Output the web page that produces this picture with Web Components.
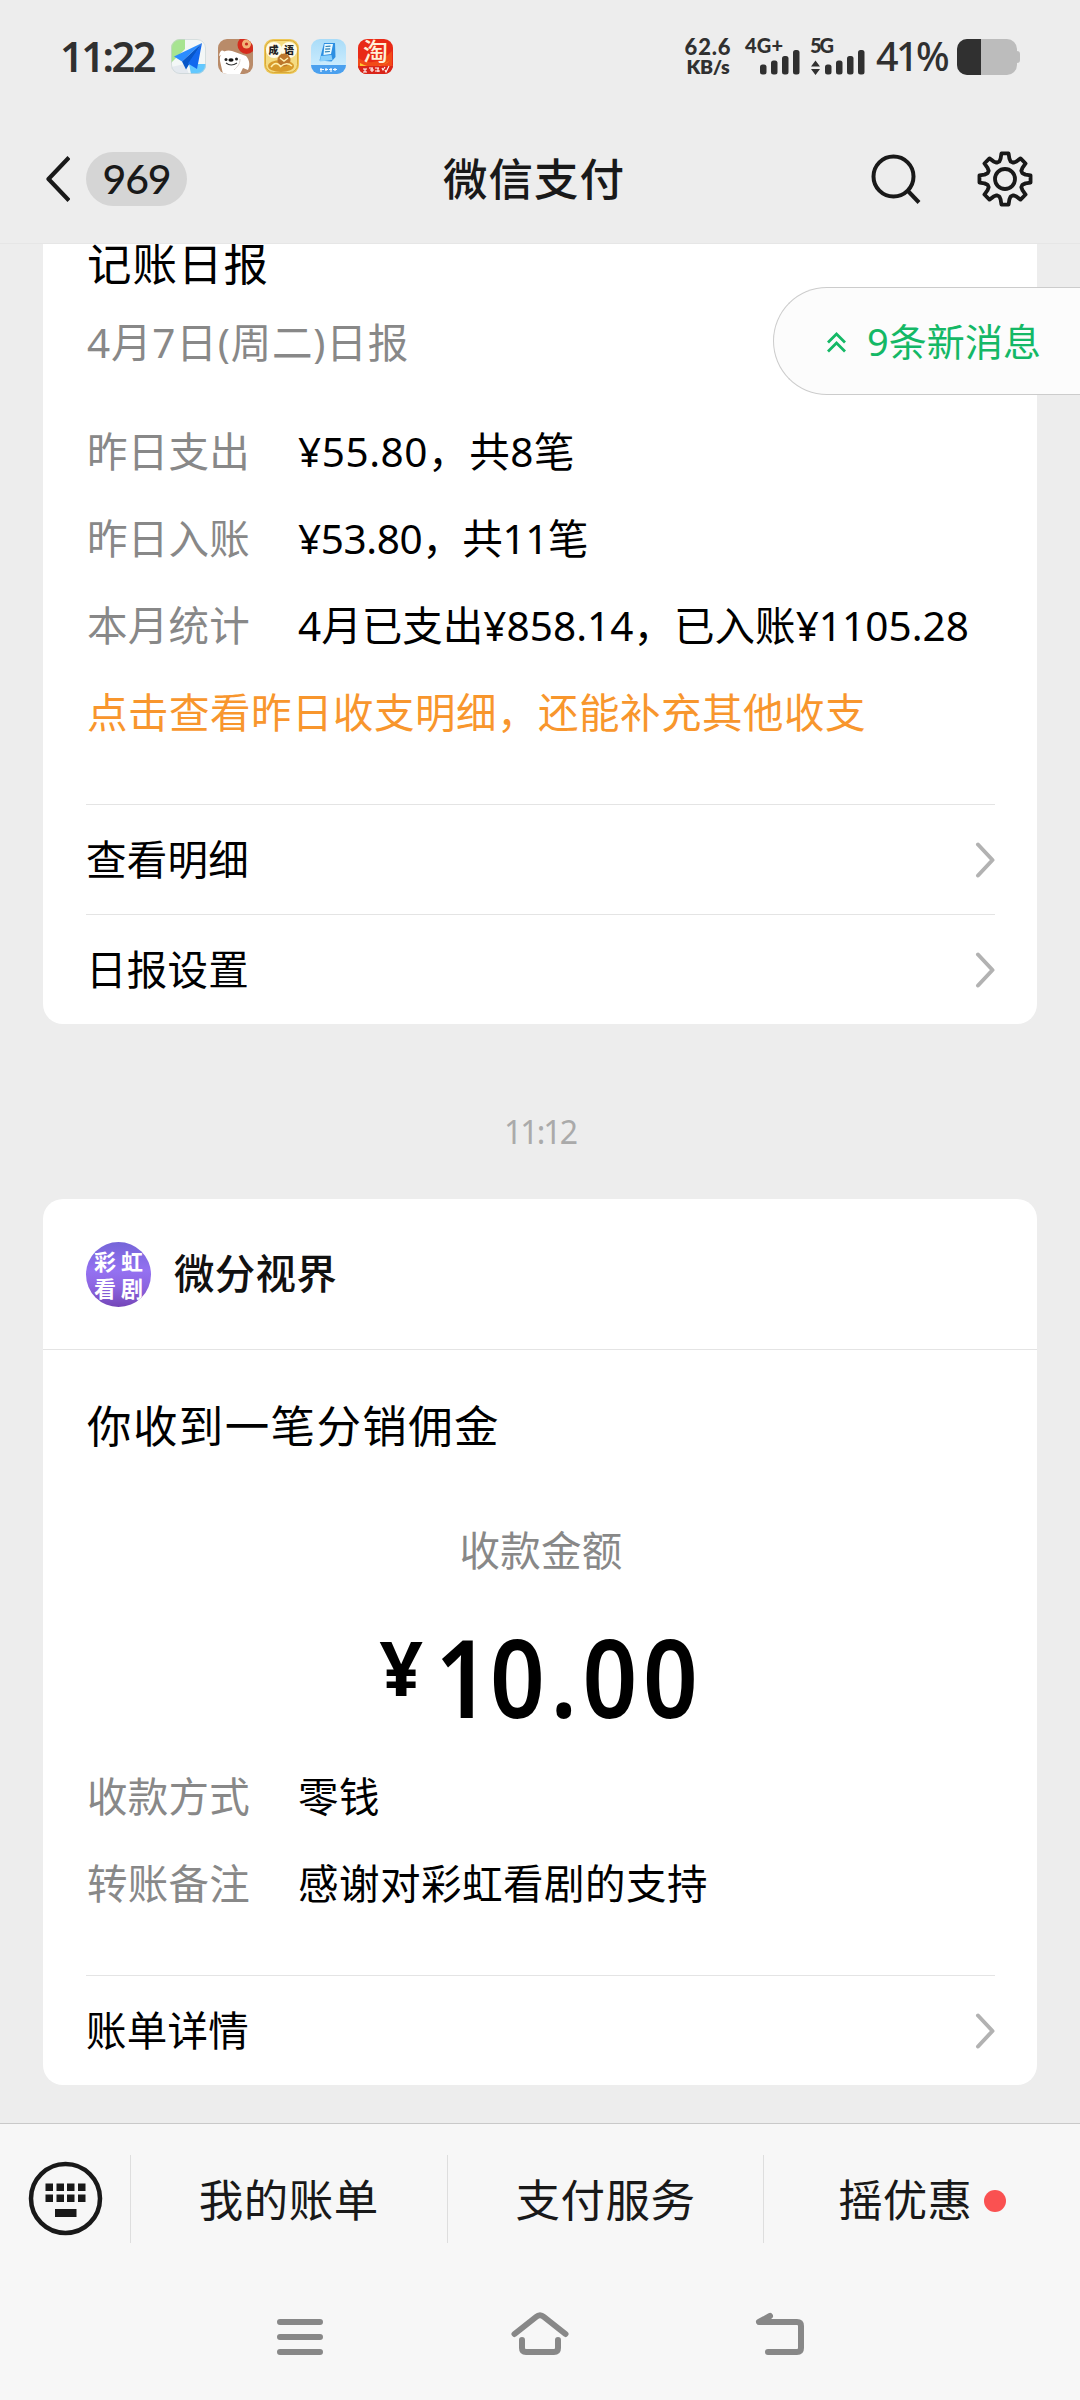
<!DOCTYPE html>
<html lang="zh-CN">
<head>
<meta charset="utf-8">
<title>微信支付</title>
<style>
html,body{margin:0;padding:0}
body{width:1080px;height:2400px;overflow:hidden;background:#ededed;color:#000;font-family:"Noto Sans","Noto Sans CJK SC",sans-serif;font-size:40.5px}
</style>
</head>
<body>
<pay-screen></pay-screen>
<script>
function define(name, html, setup) {
  const t = document.createElement('template');
  t.innerHTML = html;
  customElements.define(name, class extends HTMLElement {
    connectedCallback() {
      if (this.shadowRoot) return;
      this.attachShadow({ mode: 'open' }).appendChild(t.content.cloneNode(true));
      if (setup) setup(this, this.shadowRoot);
    }
  });
}

// Text whose tracking is adjusted so that its advance equals the "w" attribute.
// "sx" condenses the glyphs horizontally.
define('fit-text', `
<style>:host{display:block;white-space:nowrap;line-height:1.4;flex:none}span{display:inline-block;transform-origin:0 50%}</style>
<span><slot></slot></span>`, (el, root) => {
  const s = root.querySelector('span');
  const w = parseFloat(el.getAttribute('w'));
  const sx = parseFloat(el.getAttribute('sx')) || 1;
  const n = [...el.textContent].length;
  if (w && n) {
    const natural = s.getBoundingClientRect().width;
    s.style.letterSpacing = ((w / sx - natural) / n).toFixed(3) + 'px';
    el.style.width = w + 'px';
    if (sx !== 1) s.style.transform = 'scaleX(' + sx + ')';
  }
});

define('app-icons', `
<style>:host{display:flex;gap:11.7px;flex:none}svg{width:35px;height:35px;display:block;overflow:visible}text{font-family:"Noto Sans CJK SC",sans-serif}</style>
<svg viewBox="0 0 35 35"><defs><clipPath id="c"><rect width="35" height="35" rx="9"/></clipPath></defs><g clip-path="url(#c)"><rect width="35" height="35" fill="#f3f7f7"/><path d="M0 0h14v10L0 24z" fill="#a7e491"/><path d="M18 25h17v10H20z" fill="#62c8ff"/><path d="M0 28l14-3 4 10H0z" fill="#e4e9ef"/></g><path d="M31 4L3 17.500l8 5z" fill="#2b8dff"/><path d="M31 4L11 22.500l4 8 3-5z" fill="#0756c8"/><path d="M31 4L17 24.500l9 5.500z" fill="#1268ee"/><rect x=".5" y=".5" width="34" height="34" rx="8.500" fill="none" stroke="#c9d2d2" stroke-width=".7"/></svg>
<svg viewBox="0 0 35 35"><defs><clipPath id="c"><rect width="35" height="35" rx="9"/></clipPath></defs><g clip-path="url(#c)"><rect width="35" height="35" fill="#b98b69"/><circle cx="28.500" cy="6" r="9" fill="#d52c1d"/><circle cx="28.500" cy="5" r="4.500" fill="#f3b477"/><circle cx="28.500" cy="5" r="1.600" fill="#c92d20"/><path d="M2 22C1 14 7 10 14 12l14 5c4 5 4 9 2 14l-5-2-3 6H5z" fill="#fff"/><path d="M1 17c1-6 4-7 6-3z" fill="#fff"/><path d="M22 20c0 5-2 7-6 11" fill="none" stroke="#d8cfc8"/></g><circle cx="8" cy="20.500" r="1.500" fill="#222"/><circle cx="18.500" cy="20" r="1.500" fill="#222"/><ellipse cx="13" cy="21" rx="2.600" ry="1.800" fill="#111"/><path d="M8 24q5 4 11 0" fill="none" stroke="#333" stroke-width="1.100"/></svg>
<svg viewBox="0 0 35 35"><rect width="35" height="35" rx="9" fill="#edc858"/><rect x="1.500" y="1.500" width="32" height="32" rx="8" fill="#f4dc83" stroke="#d9a93a"/><circle cx="10" cy="11" r="8" fill="#fffbe9"/><circle cx="25" cy="11" r="8" fill="#fffbe9"/><text x="4.500" y="15" font-size="10" font-weight="900" fill="#222">成</text><text x="20" y="15" font-size="10" font-weight="900" fill="#222">语</text><ellipse cx="17" cy="27" rx="13" ry="6" fill="#d89b2c"/><circle cx="20" cy="21" r="6.500" fill="#bd772c"/><path d="M7 28q5-7 10 0m-1-9l4 3 4-3m-8 9q6-6 12-1" fill="none" stroke="#fff0ae" stroke-width="1.500"/></svg>
<svg viewBox="0 0 35 35"><defs><clipPath id="c"><rect width="35" height="35" rx="9"/></clipPath><linearGradient id="g" x2="0" y2="1"><stop stop-color="#a9dcf8"/><stop offset="1" stop-color="#d5f0ff"/></linearGradient></defs><g clip-path="url(#c)"><rect width="35" height="35" fill="url(#g)"/><path d="M0 26h35v9H0z" fill="#4ba0ee"/></g><path d="M13 4l11 0 .5 14-4 4.500-12-1z" fill="#2c8fe2"/><path d="M13.500 5l8.500 0-2 10-7.500 1z" fill="#e9faff"/><path d="M9.500 17l11-1 1 5-12.500 1.500z" fill="#8ad0fb"/><path d="M14.500 7.500l5-.4m-5.300 3l5-.3m-5.300 3l5-.3" stroke="#2c7fb4" stroke-width="1.200"/><path d="M9 30.500h4m1 0h3m1 0h3m1 0h4M10 29v4m5-4v3m5-3v4m4-4v3" stroke="#f5fbff" stroke-width="1.200"/></svg>
<svg viewBox="0 0 35 35"><rect width="35" height="35" rx="9" fill="#e92a17"/><path d="M0 19Q18 30 34 12v14a9 9 0 0 1-9 9H9a9 9 0 0 1-9-9z" fill="#f24a18"/><path d="M2 24q17 9 30-3-7 9-30 6z" fill="#ffc931"/><path d="M0 27h35c-1 5-4 8-9 8H9c-5 0-8-3-9-8z" fill="#d9251a"/><text x="5" y="21.500" font-size="25" font-weight="500" fill="#fff0d8">淘</text><path d="M5 30h4m-2 0v3m-2 0h4m2-4h4m-3 2h4m-2-2v4m3-4h4m-4 3h5m-2-3v4m4-4l1 2 2-3m0 3l1 2 3-6" fill="none" stroke="#fff" stroke-width="1.100"/></svg>`);

define('signal-bars', `
<style>:host{display:block;flex:none}svg{display:block;width:54px;height:37px;overflow:visible}text{font-family:Lato,sans-serif;font-weight:900;fill:#303030}</style>
<svg viewBox="0 0 54 37"><text x="-1" y="15" font-size="20"></text><g fill="#303030"><rect class="b" y="26.500" width="6.500" height="10" rx="2.500"/><rect class="b" y="22.500" width="6.500" height="14" rx="2.500"/><rect class="b" y="18" width="6.500" height="18.500" rx="2.500"/><rect class="b" y="12" width="6.500" height="24.500" rx="2.500"/><path class="arr" d="M0 28.500l4.500-6 4.500 6zM0 31h9l-4.500 6z"/></g></svg>`, (el, root) => {
  const t = root.querySelector('text');
  t.textContent = el.getAttribute('net');
  t.setAttribute('textLength', el.getAttribute('tw'));
  root.querySelectorAll('.b').forEach((b, i) => b.setAttribute('x', 14 + i * 11));
  if (!el.hasAttribute('data')) root.querySelector('.arr').remove();
});

define('status-bar', `
<style>
:host{display:flex;height:112px;box-sizing:border-box;align-items:center;color:#303030;padding:1px 59px 0 60px}
.time{font-weight:600;font-size:41.500px;margin-right:17px}
.sp{flex:1}
.rate{display:flex;flex-direction:column;align-items:center;width:48px;font:900 22px/20px Lato,sans-serif;margin-right:14px}
.rate fit-text{line-height:20px}
.pct{font-weight:500;font-size:39.500px;margin:1px 10px 0 10px}
.bat{width:64px;height:36px;display:block}
signal-bars+signal-bars{margin-left:10px}
signal-bars{width:55px}
</style>
<fit-text class="time" w="94">11:22</fit-text><app-icons></app-icons><span class="sp"></span>
<div class="rate"><fit-text w="47">62.6</fit-text><fit-text w="43" style="font-size:19.500px;font-weight:800">KB/s</fit-text></div>
<signal-bars net="4G+" tw="38"></signal-bars><signal-bars net="5G" tw="24" data></signal-bars>
<fit-text class="pct" w="71">41%</fit-text>
<svg class="bat" viewBox="0 0 64 36"><path d="M10 0h40a10 10 0 0 1 10 10v2q3 0 3 3v6q0 3-3 3v2a10 10 0 0 1-10 10H10A10 10 0 0 1 0 26V10A10 10 0 0 1 10 0z" fill="#bcbcbc"/><path d="M24 0H10A10 10 0 0 0 0 10v16a10 10 0 0 0 10 10h14z" fill="#303030"/></svg>`);

define('nav-bar', `
<style>
:host{display:grid;grid-template-columns:1fr auto 1fr;height:132px;box-sizing:border-box;align-items:center;color:#191919;padding:2px 47px 0 45px;border-bottom:1px solid #e6e6e6}
.l{display:flex;align-items:center;gap:16px}
.r{display:flex;align-items:center;justify-content:flex-end;gap:56px}
.pill{width:101px;height:54px;border-radius:27px;background:#d5d5d5;display:flex;align-items:center;justify-content:center;font:500 41px/54px Lato,"Noto Sans",sans-serif}
.title{font-weight:500;font-size:44.500px;margin:2px 10px 0 0}
svg{display:block;fill:none;stroke:#191919}
</style>
<div class="l"><svg width="25" height="48" viewBox="0 0 25 48" stroke-width="4.200" stroke-linejoin="round"><path d="M24 2.500L3.500 24 24 45.500"/></svg><div class="pill"><fit-text w="68">969</fit-text></div></div>
<fit-text class="title" w="182">微信支付</fit-text>
<div class="r"><svg width="50" height="50" viewBox="0 0 50 50" stroke-width="4"><circle cx="22.500" cy="22.500" r="20"/><path d="M36.500 36.500L48 48.500"/></svg>
<svg width="56" height="56" viewBox="-28 -28 56 56" stroke-width="3.800" stroke-linejoin="round"><path class="gear"/><circle r="10"/></svg></div>`, (el, root) => {
  const pts = [];
  for (let i = 0; i < 8; i++)
    for (const [r, a] of [[18.3, -18], [21, -12], [25.800, -8], [25.800, 8], [21, 12], [18.3, 18]]) {
      const q = (i * 45 + a) * Math.PI / 180;
      pts.push((r * Math.sin(q)).toFixed(2) + ' ' + (-r * Math.cos(q)).toFixed(2));
    }
  root.querySelector('.gear').setAttribute('d', 'M' + pts.join('L') + 'Z');
});

define('info-row', `
<style>:host{display:flex;align-items:center;height:87px}.k{color:#888;width:211px;flex:none}</style>
<div class="k"><slot name="k"></slot></div><slot></slot>`);

define('link-row', `
<style>:host{display:flex;align-items:center;justify-content:space-between;height:110px;box-sizing:border-box;border-top:1px solid #e4e4e4;margin:0 42px 0 43px;padding-top:1px}svg{display:block;fill:none;stroke:#b2b2b2;stroke-width:4;stroke-linecap:round;stroke-linejoin:round}</style>
<slot></slot><svg width="20" height="38" viewBox="0 0 20 38"><path d="M3 3.500L17.500 19 3 34.500"/></svg>`);

define('msg-card', `
<style>:host{display:block;background:#fff;border-radius:20px;margin:0 43px;overflow:hidden}:host([cut]){border-radius:0 0 20px 20px}</style><slot></slot>`);

define('brand-head', `
<style>
:host{display:flex;align-items:center;height:151px;box-sizing:border-box;padding:0 43px 0;border-bottom:1px solid #e4e4e4;gap:23px;font-weight:500;color:#111}
.a{width:65px;height:65px;border-radius:50%;background:linear-gradient(#7565d8,#9471f1 45%,#8c64df 70%,#7446b8);display:grid;grid-template-columns:24px 24px;grid-auto-rows:27px;column-gap:3px;justify-content:center;align-content:center;color:#fff;font:700 22px/26px "Noto Sans CJK SC",sans-serif;text-align:center;overflow:hidden}
</style>
<div class="a"><span>彩</span><span>虹</span><span>看</span><span>剧</span></div><slot></slot>`);

define('new-messages', `
<style>
:host{position:absolute;right:0;top:287px;width:307px;height:108px;box-sizing:border-box;border:1px solid #ccc;border-right:0;border-radius:54px 0 0 54px;background:#fcfcfc;display:flex;align-items:center;padding-left:53px;gap:21px;color:#14b866;font-size:38px}
svg{display:block;fill:none;stroke:#14b866;stroke-width:2.800;margin-top:3px}
::slotted(*){padding-top:1px}
</style>
<svg width="19" height="21" viewBox="0 0 19 21"><path d="M1 10.500l8.500-8.500 8.500 8.500M1 19.500l8.500-8.500 8.500 8.500"/></svg><slot></slot>`);

define('amount-view', `
<style>
:host{display:flex;height:143px;justify-content:center;align-items:flex-start;font-weight:600}
.y{font-size:76px;line-height:76px;font-weight:700;margin:18px 5px 0 0}
.n{font-size:109px;line-height:109px;margin:10px -6px 0 0}
b{font-weight:inherit;letter-spacing:0;margin-left:7px}
</style>
<fit-text class="y" w="44">¥</fit-text><fit-text class="n" w="280" sx=".88"><b>1</b>0.00</fit-text>`);

define('menu-bar', `
<style>
:host{display:flex;height:157px;align-items:center;box-sizing:border-box;border-top:1px solid #c9c9c9;background:#f7f7f7;color:#191919;font-size:44.500px;padding-bottom:7px}
.k{width:130px;flex:none;display:flex;padding-left:28px;box-sizing:border-box}
.t{flex:1;height:88px;border-left:1px solid #dedede;box-sizing:border-box;display:flex;align-items:center;justify-content:center;gap:12px;padding-top:4px}
.dot{width:22px;height:22px;border-radius:50%;background:#fa5151}
</style>
<div class="k"><svg width="75" height="75" viewBox="0 0 75 75"><circle cx="37.500" cy="37.500" r="34.500" fill="none" stroke="#191919" stroke-width="4.500"/><path d="M17.500 22.500h7.500v7.500h-7.500zM28.500 22.500H36v7.500h-7.500zM39 22.500h7.500v7.500H39zM50 22.500h7.500v7.500H50zM17.500 33.500h7.500V41h-7.500zM28.500 33.500H36V41h-7.500zM39 33.500h7.500V41H39zM50 33.500h7.500V41H50zM27 48h21.500v8H27z" fill="#191919"/></svg></div>
<div class="t"><fit-text w="180">我的账单</fit-text></div>
<div class="t"><fit-text w="180">支付服务</fit-text></div>
<div class="t"><fit-text w="134">摇优惠</fit-text><span class="dot"></span></div>`);

define('system-keys', `
<style>:host{display:flex;justify-content:center;align-items:flex-start;gap:180px;height:120px;box-sizing:border-box;padding-top:26px;background:#f7f7f7}svg{display:block;fill:none;stroke:#888;stroke-width:6;stroke-linecap:round;stroke-linejoin:round}</style>
<svg width="60" height="60" viewBox="270 2306 60 60"><path d="M280 2322h40M280 2337h40M280 2352h40"/></svg>
<svg width="60" height="60" viewBox="510 2306 60 60"><path d="M514.500 2334L536 2317q4-3.500 8 0L565.500 2334M522 2340v8q0 4 4 4h28q4 0 4-4v-8"/></svg>
<svg width="60" height="60" viewBox="750 2306 60 60"><path d="M770 2316l-11 6h38q4 0 4 4v22q0 4-4 4h-29"/></svg>`);

define('pay-screen', `
<style>
:host{display:flex;flex-direction:column;height:2400px;position:relative}
.feed{flex:1;min-height:0;overflow:hidden}
.h{font-size:44.500px}.m{color:#888}
.p{padding:0 42px 0 44px}
.t1{height:41px;display:flex;align-items:center}
.t2{height:116px;display:flex;align-items:center}
.pad{height:47px}
.or{display:flex;align-items:center;height:87px;color:#f8962d}
.time{height:175px;display:flex;align-items:center;justify-content:center;font-size:32px;color:#aaa;padding-top:41px;box-sizing:border-box}
</style>
<status-bar></status-bar>
<nav-bar></nav-bar>
<div class="feed">
<msg-card cut><div class="p">
<div class="t1"><fit-text class="h" w="182">记账日报</fit-text></div>
<div class="t2"><fit-text class="m" w="322">4月7日(周二)日报</fit-text></div>
<div style="height:8px"></div>
<info-row><fit-text slot="k" w="163">昨日支出</fit-text><fit-text w="277">¥55.80，共8笔</fit-text></info-row>
<info-row><fit-text slot="k" w="163">昨日入账</fit-text><fit-text w="290">¥53.80，共11笔</fit-text></info-row>
<info-row><fit-text slot="k" w="163">本月统计</fit-text><fit-text w="671">4月已支出¥858.14，已入账¥1105.28</fit-text></info-row>
<div class="or"><fit-text w="779">点击查看昨日收支明细，还能补充其他收支</fit-text></div>
<div class="pad"></div></div>
<link-row><fit-text w="163">查看明细</fit-text></link-row>
<link-row><fit-text w="163">日报设置</fit-text></link-row>
</msg-card>
<div class="time"><fit-text w="72">11:12</fit-text></div>
<msg-card>
<brand-head><fit-text w="163">微分视界</fit-text></brand-head>
<div class="p">
<div style="height:152px;display:flex;align-items:center"><fit-text class="h" w="413">你收到一笔分销佣金</fit-text></div>
<div style="height:98px;display:flex;align-items:center;justify-content:center"><fit-text class="m" w="163">收款金额</fit-text></div>
<div style="height:11px"></div>
<amount-view></amount-view>
<info-row><fit-text slot="k" w="163">收款方式</fit-text><fit-text w="82">零钱</fit-text></info-row>
<info-row><fit-text slot="k" w="163">转账备注</fit-text><fit-text w="410">感谢对彩虹看剧的支持</fit-text></info-row>
<div class="pad"></div>
</div>
<link-row><fit-text w="163">账单详情</fit-text></link-row>
</msg-card>
</div>
<menu-bar></menu-bar>
<system-keys></system-keys>
<new-messages><fit-text w="174">9条新消息</fit-text></new-messages>`);
</script>
</body>
</html>
